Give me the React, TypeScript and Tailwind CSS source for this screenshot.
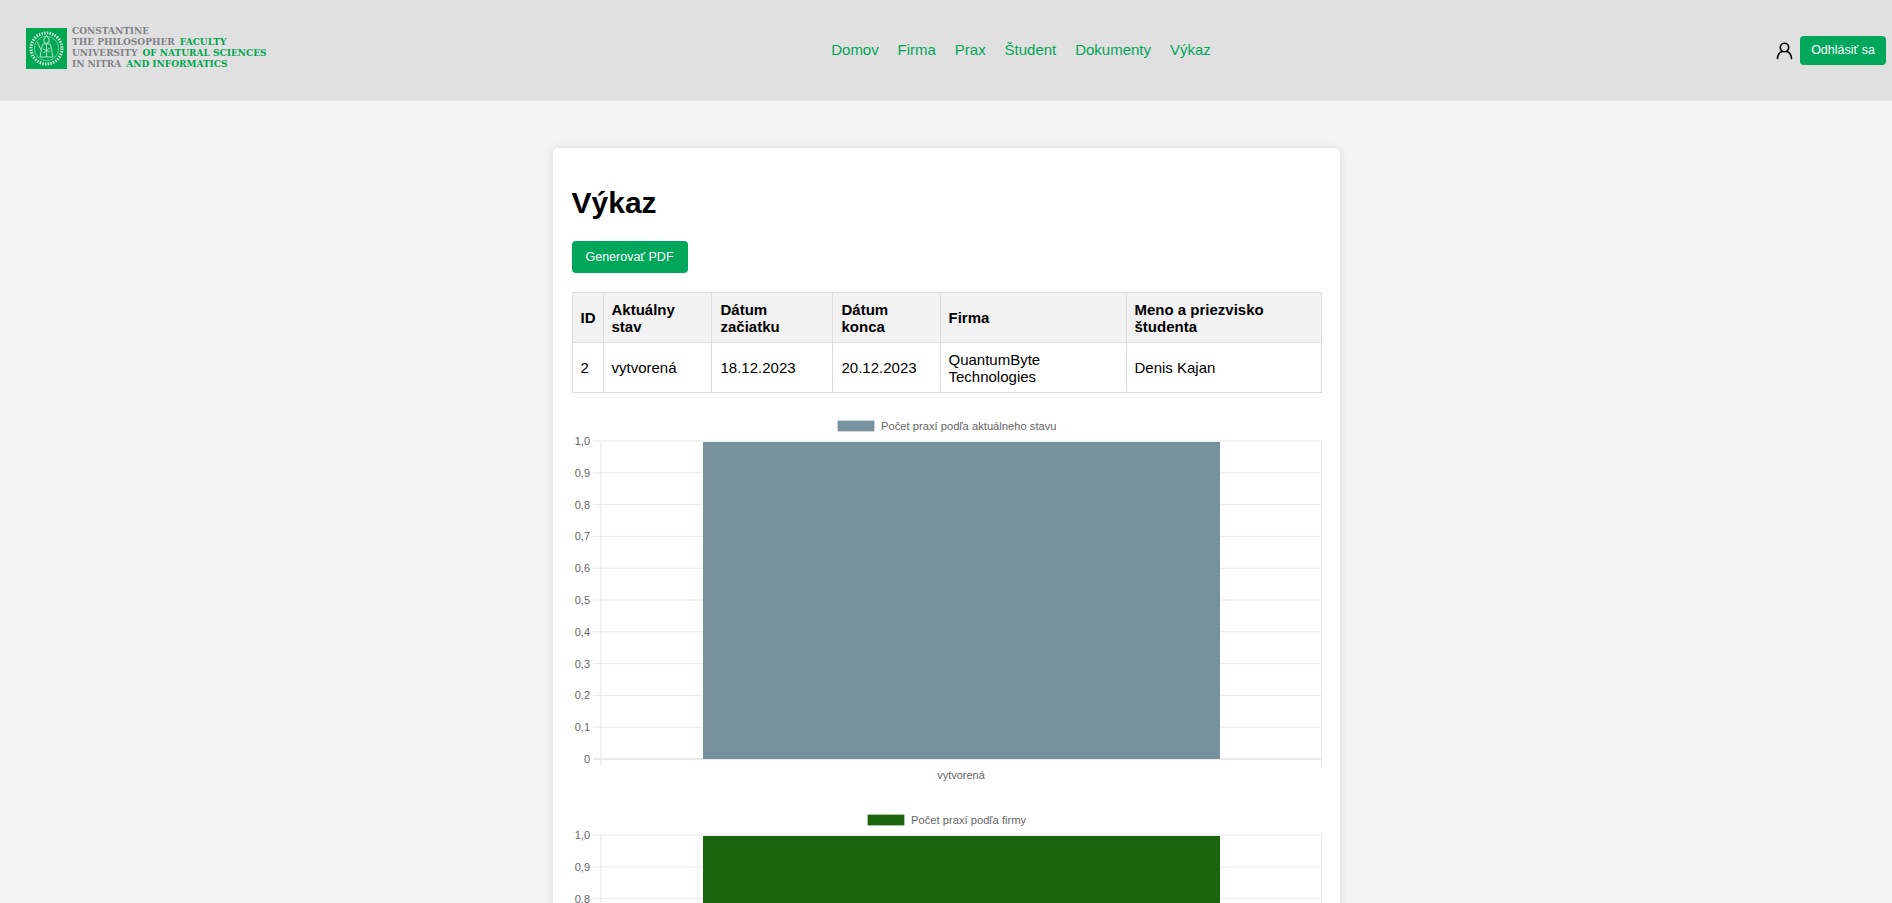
const navLinks = ["Domov", "Firma", "Prax", "Študent", "Dokumenty", "Výkaz"];
const ticks = ["1,0", "0,9", "0,8", "0,7", "0,6", "0,5", "0,4", "0,3", "0,2", "0,1", "0"];

function Seal() {
  return (
    <svg width="41" height="41" viewBox="0 0 41 41" className="shrink-0">
      <rect width="41" height="41" fill="#00a651" />
      <g fill="none" stroke="#d8f2e2">
        <circle cx="20.5" cy="20.5" r="15.5" strokeWidth="3" strokeDasharray="1.4 1.3" />
        <circle cx="20.5" cy="20.5" r="12.2" strokeWidth="0.5" />
        <path d="M18 11 L20.5 7.5 L23 11 L23 14 C23 15.5 18 15.5 18 14 Z" strokeWidth="0.9" />
        <path d="M16.5 16.5 C18 15.5 23 15.5 24.5 16.5 L27 29 L14 29 Z M20.5 16 L20.5 29 M17 21 L24 24 M24 20 L17 25 M11.5 14 L15 22" strokeWidth="0.8" />
      </g>
    </svg>
  );
}

function Logo() {
  return (
    <div className="-mt-[4px] flex w-[240px] items-center gap-[5px]">
      <Seal />
      <div className="-mt-[1px] font-['DejaVu_Serif',serif] text-[9px] leading-[11.2px] font-bold whitespace-nowrap text-[#808285]">
        <div>CONSTANTINE</div>
        <div className="flex gap-[5px]">
          <span>THE PHILOSOPHER</span>
          <span className="text-[#00a651]">FACULTY</span>
        </div>
        <div className="flex gap-[5px]">
          <span>UNIVERSITY</span>
          <span className="text-[#00a651]">OF NATURAL SCIENCES</span>
        </div>
        <div className="flex gap-[5px]">
          <span>IN NITRA</span>
          <span className="text-[#00a651]">AND INFORMATICS</span>
        </div>
      </div>
    </div>
  );
}

function UserIcon() {
  return (
    <svg width="17" height="18" viewBox="0 0 17 18" fill="none" stroke="#000" strokeWidth="1.6" strokeLinecap="round">
      <circle cx="8.5" cy="5.5" r="4.2" />
      <path d="M1.5 16.5 C1.5 12.5 4 10 6 9.6 M15.5 16.5 C15.5 12.5 13 10 11 9.6" />
    </svg>
  );
}

function Chart({ label, color, legendX, xLabel }: { label: string; color: string; legendX: number; xLabel?: string }) {
  const top = 30;
  const step = 31.8;
  return (
    <svg width="750" height="375" className="block font-['Liberation_Sans',sans-serif]">
      <rect x={legendX + 0.5} y="9.5" width="37" height="11" fill={color} stroke="#ffffff" strokeOpacity="0.25" />
      <text x={legendX + 44} y="19" fontSize="11.2" fill="#666666">{label}</text>

      {ticks.map((t, i) => {
        const y = top + i * step;
        return (
          <g key={t}>
            <line x1="21" x2="750" y1={y} y2={y} stroke={i === 10 ? "#d4d4d4" : "#e8e8e8"} />
            <text x="18" y={y + 4} fontSize="11" textAnchor="end" fill="#666666">{t}</text>
          </g>
        );
      })}
      <line x1="29" x2="29" y1={top} y2={top + 10 * step + 7} stroke="#e4e4e4" />
      <line x1="749.5" x2="749.5" y1={top} y2={top + 10 * step + 7} stroke="#e8e8e8" />

      <rect x="131" y={top + 1} width="517" height={10 * step - 1} fill={color} />
      {xLabel && (
        <text x="389" y={top + 10 * step + 20} fontSize="11" textAnchor="middle" fill="#666666">{xLabel}</text>
      )}
    </svg>
  );
}

export default function App() {
  return (
    <div className="h-screen overflow-hidden bg-[#f4f4f4] font-['Liberation_Sans',Arial,sans-serif] text-black">
      {/* Header */}
      <header className="flex h-[101px] items-center justify-between bg-[#e0e0e0] pr-[6px] pl-[26px]">
        <Logo />
        <nav className="flex gap-[18.9px] text-[15px] text-[#00a65a]">
          {navLinks.map((link) => (
            <a key={link} href="#">
              {link}
            </a>
          ))}
        </nav>
        <div className="flex items-center gap-[7px]">
          <UserIcon />
          <button className="h-[29px] w-[86px] rounded-[4px] bg-[#00a65a] text-[12.5px] text-white">Odhlásiť sa</button>
        </div>
      </header>

      {/* Card */}
      <main className="mx-auto mt-[47px] w-[787px] rounded-[5px] bg-white pt-[37px] pr-[18px] pl-[19px] shadow-[0_0_10px_rgba(0,0,0,0.1)]">
        <h1 className="text-[30px] leading-[36px] font-bold">Výkaz</h1>
        <button className="mt-[20px] block h-[32px] w-[116px] rounded-[4px] bg-[#00a65a] text-[12.5px] text-white">Generovať PDF</button>

        <table className="mt-[19px] w-[750px] table-fixed border-collapse text-left text-[15px] leading-[17px]">
          <thead>
            <tr className="bg-[#f2f2f2] font-bold">
              <th className="h-[50px] w-[31px] border border-[#dddddd] px-[8px]">ID</th>
              <th className="w-[108px] border border-[#dddddd] px-[8px]">Aktuálny stav</th>
              <th className="w-[121px] border border-[#dddddd] pr-[8px] pl-[9px]">Dátum začiatku</th>
              <th className="w-[108px] border border-[#dddddd] pr-[8px] pl-[9px]">Dátum konca</th>
              <th className="w-[186px] border border-[#dddddd] px-[8px]">Firma</th>
              <th className="border border-[#dddddd] px-[8px]">Meno a priezvisko študenta</th>
            </tr>
          </thead>
          <tbody>
            <tr>
              <td className="h-[50px] border border-[#dddddd] px-[8px]">2</td>
              <td className="border border-[#dddddd] px-[8px]">vytvorená</td>
              <td className="border border-[#dddddd] pr-[8px] pl-[9px]">18.12.2023</td>
              <td className="border border-[#dddddd] pr-[8px] pl-[9px]">20.12.2023</td>
              <td className="border border-[#dddddd] px-[8px]">QuantumByte Technologies</td>
              <td className="border border-[#dddddd] px-[8px]">Denis Kajan</td>
            </tr>
          </tbody>
        </table>

        <div className="mt-[18px] flex flex-col gap-[19px]">
          <Chart label="Počet praxí podľa aktuálneho stavu" color="#78919f" legendX={265} xLabel="vytvorená" />
          <Chart label="Počet praxí podľa firmy" color="#1b640c" legendX={295} />
        </div>
      </main>
    </div>
  );
}
